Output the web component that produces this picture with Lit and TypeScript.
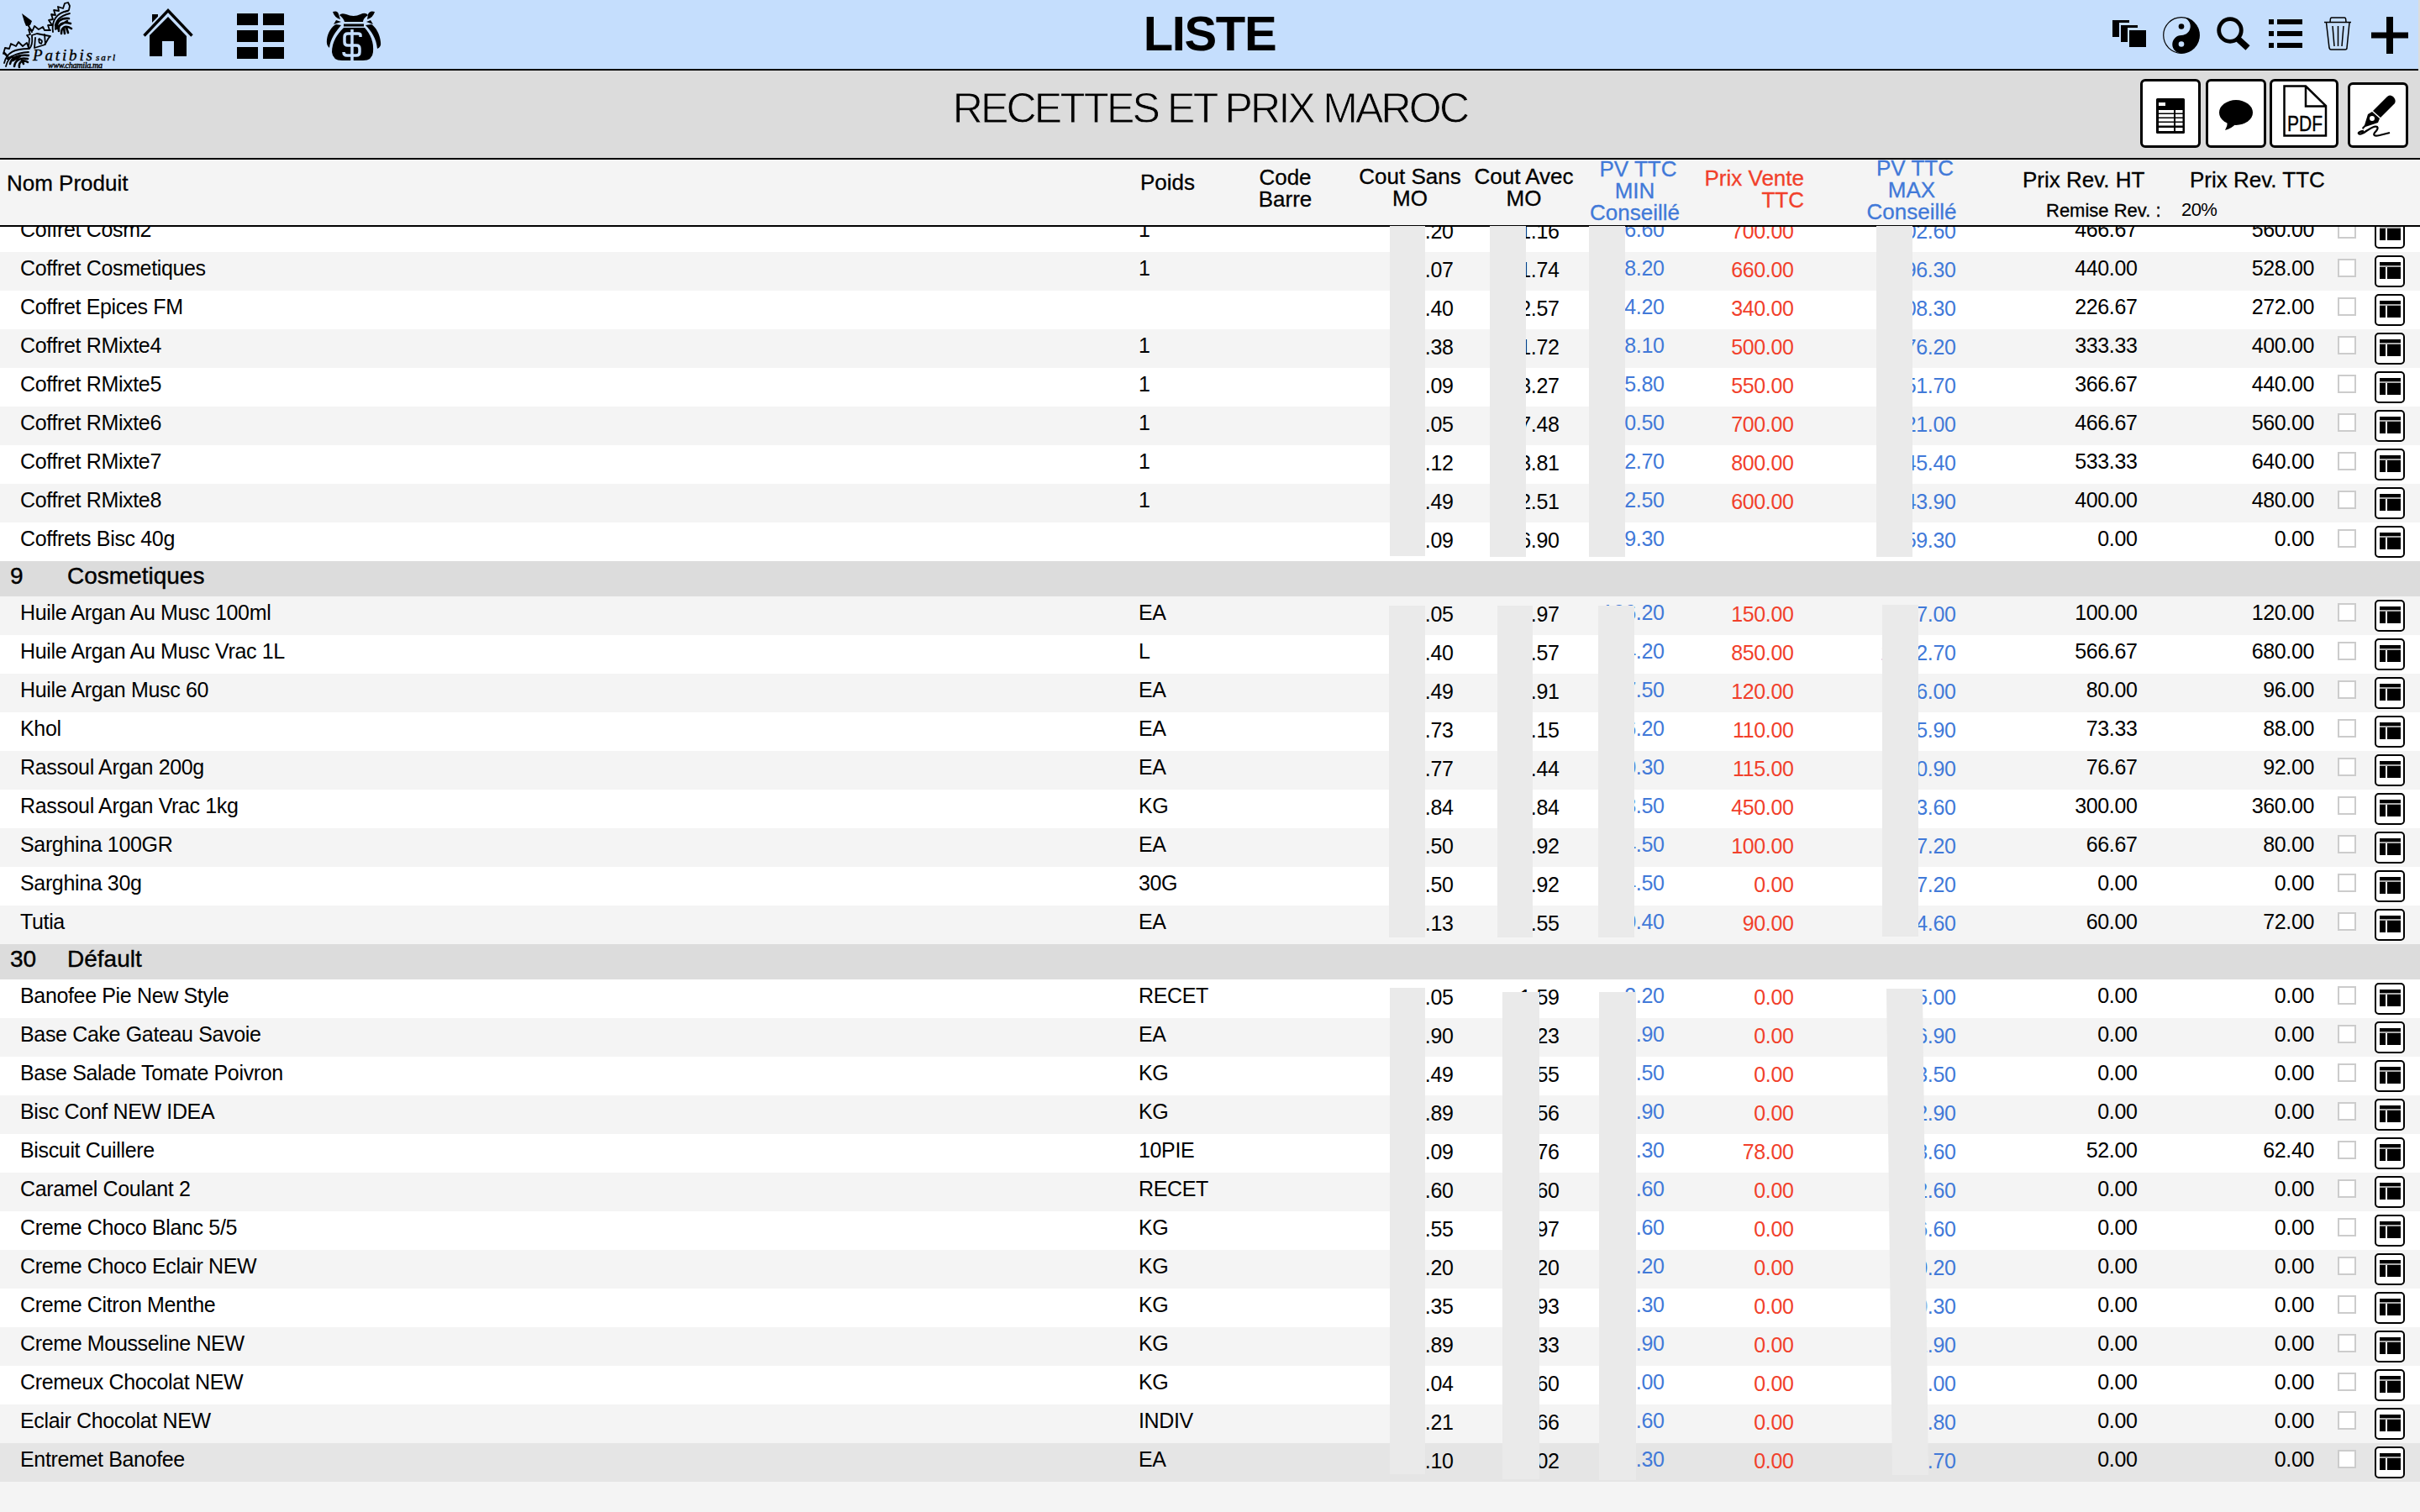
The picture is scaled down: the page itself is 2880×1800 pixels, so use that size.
import { LitElement, html, css, svg } from "lit";
import { customElement } from "lit/decorators.js";

type Row = string[];
interface Mask { x: number; w: number; y: number; h: number; clip?: string }
interface Group { id?: string; label?: string; rows: Row[]; masks: Mask[]; even: boolean }

const parse = (t: string): Row[] => t.trim().split("\n").map((l) => l.split("|").map((c) => c.trim()));

const GROUPS: Group[] = [
  {
    even: false,
    rows: parse(`
Coffret Cosm2|1|8.20|1.16|6.60|700.00|02.60|466.67|560.00
Coffret Cosmetiques|1|0.07|1.74|8.20|660.00|96.30|440.00|528.00
Coffret Epices FM||8.40|2.57|4.20|340.00|08.30|226.67|272.00
Coffret RMixte4|1|8.38|1.72|8.10|500.00|76.20|333.33|400.00
Coffret RMixte5|1|0.09|3.27|5.80|550.00|51.70|366.67|440.00
Coffret RMixte6|1|6.05|7.48|0.50|700.00|21.00|466.67|560.00
Coffret RMixte7|1|.12|3.81|2.70|800.00|45.40|533.33|640.00
Coffret RMixte8|1|.49|2.51|2.50|600.00|43.90|400.00|480.00
Coffrets Bisc 40g||8.09|6.90|9.30||59.30|0.00|0.00`),
    masks: [
      { x: 1654, w: 42, y: -1, h: 393 },
      { x: 1773, w: 43, y: -1, h: 394 },
      { x: 1891, w: 43, y: -1, h: 394 },
      { x: 2233, w: 43, y: -1, h: 394 },
    ],
  },
  {
    id: "9", label: "Cosmetiques", even: true,
    rows: parse(`
Huile Argan Au Musc 100ml|EA|.05|.97|106.20|150.00|7.00|100.00|120.00
Huile Argan Au Musc Vrac 1L|L|.40|.57|4.20|850.00|1\u200a202.70|566.67|680.00
Huile Argan Musc 60|EA|.49|.91|7.50|120.00|6.00|80.00|96.00
Khol|EA|.73|.15|6.20|110.00|5.90|73.33|88.00
Rassoul Argan 200g|EA|.77|.44|0.30|115.00|0.90|76.67|92.00
Rassoul Argan Vrac 1kg|KG|.84|.84|8.50|450.00|3.60|300.00|360.00
Sarghina 100GR|EA|.50|.92|4.50|100.00|7.20|66.67|80.00
Sarghina 30g|30G|.50|.92|4.50|0.00|7.20|0.00|0.00
Tutia|EA|.13|.55|0.40|90.00|4.60|60.00|72.00`),
    masks: [
      { x: 1653, w: 43, y: 11, h: 395 },
      { x: 1782, w: 42, y: 11, h: 395 },
      { x: 1902, w: 43, y: 11, h: 395 },
      { x: 2240, w: 43, y: 10, h: 395 },
    ],
  },
  {
    id: "30", label: "Défault", even: false,
    rows: parse(`
Banofee Pie New Style|RECET|.05|1.59|2.20|0.00|5.00|0.00|0.00
Base Cake Gateau Savoie|EA|.90|.23|.90|0.00|6.90|0.00|0.00
Base Salade Tomate Poivron|KG|.49|.55|.50|0.00|3.50|0.00|0.00
Bisc Conf NEW IDEA|KG|.89|.56|.90|0.00|2.90|0.00|0.00
Biscuit Cuillere|10PIE|.09|.76|.30|78.00|3.60|52.00|62.40
Caramel Coulant 2|RECET|.60|.60|.60|0.00|2.60|0.00|0.00
Creme Choco Blanc 5/5|KG|.55|.97|.60|0.00|6.60|0.00|0.00
Creme Choco Eclair NEW|KG|.20|.20|.20|0.00|0.20|0.00|0.00
Creme Citron Menthe|KG|.35|.93|.30|0.00|0.30|0.00|0.00
Creme Mousseline NEW|KG|.89|.33|.90|0.00|2.90|0.00|0.00
Cremeux Chocolat NEW|KG|.04|.60|.00|0.00|.00|0.00|0.00
Eclair Chocolat NEW|INDIV|.21|.66|.60|0.00|.80|0.00|0.00
Entremet Banofee|EA|.10|.02|.30|0.00|.70|0.00|0.00`),
    masks: [
      { x: 1654, w: 42, y: 10, h: 579 },
      { x: 1788, w: 44, y: 15, h: 580 },
      { x: 1903, w: 44, y: 15, h: 581 },
      { x: 2245, w: 50, y: 11, h: 579, clip: "polygon(0 0, 86% 0, 100% 100%, 14% 100%)" },
    ],
  },
];

const scallops = svg`
  <g fill="none" stroke="#000" stroke-linecap="round" stroke-linejoin="round">
    <g stroke-width="1.8">
      <path d="M4 64 6 57 11 58 13 52 19 55 22 50 27 55 32 51 34 57 35 46 32 42 36 41 34 35 39 36 41 31 46 35 51 32 53 36 60 36"/>
      <path d="M59 36 57 30 62 30 58 24 63 23 61 17 66 18 64 12 70 13 69 8 75 10 77 4 81 3 83 7 82 12 77 14"/>
      <path d="M63 38C61 25 67 15 81 13M66 35C65 25 70 19 83 16" />
      <path d="M5 75C8 62 18 58 34 58M7 79C10 66 20 63 34 62" />
      <path d="M35 58C40 52 38 47 38 42L44 40 59 43M42 45 41 57 54 53 53 41M60 43C56 46 56 51 53 53M46 47Q52 47 49 52Q45 51 47 46"/>
    </g>
    <g stroke-width="2.6">
      <path d="M68 34C67 26 72 21 82 22M70 37C69 29 74 25 84 28M73 40C73 33 77 29 85 34M66 30 69 25M77 40 76 33M81 39 79 33M70 31 80 25"/>
      <path d="M12 76C14 68 22 65 34 66M17 79C18 72 24 68 33 70M23 80C22 74 27 70 33 74M9 70 15 67M28 76 26 71M5 63 9 67M15 72 24 67"/>
    </g>
    <path d="M33 29 38 38" stroke-width="2"/>
  </g>
  <path d="M26 16 38 25 36 30 31 31 29 26Z"/>`;

@customElement("app-root")
export class AppRoot extends LitElement {
  static styles = css`
    :host { display: block; width: 2880px; height: 1800px; overflow: hidden; background: #f4f4f4; color: #000;
      font-family: "Liberation Sans", Arial, sans-serif; }
    * { box-sizing: border-box; }
    svg { display: block; flex: none; overflow: visible; }
    .bars { background: #dcdcdc; }
    .top { height: 84px; margin-right: 2px; background: #c5defd; border-bottom: 2px solid #000;
      display: grid; grid-template-columns: 1fr auto 1fr; }
    .left { display: flex; align-items: flex-start; }
    .logo { width: 144px; height: 82px; margin-right: 26px; }
    .script { font-family: "Liberation Serif", serif; font-style: italic; stroke: #000; stroke-width: 0.4px; }
    .home { margin: 10px 52px 0 0; }
    .tiles { margin: 16px 50px 0 0; }
    .bag { margin-top: 12px; }
    .liste { font-size: 58px; font-weight: 700; line-height: 80px; letter-spacing: -1.4px; margin: 0; padding-left: 1px; }
    .right { display: flex; justify-content: flex-end; align-items: flex-start; padding: 20px 12px 0 0; }
    .band { height: 106px; border-bottom: 2px solid #000; display: grid; grid-template-columns: 1fr auto 1fr; }
    .title { grid-column: 2; margin: 0; font-size: 50px; font-weight: 400; line-height: 90px; letter-spacing: -2.8px;
      -webkit-text-stroke: 0.9px #dcdcdc; }
    .tools { display: flex; justify-content: flex-end; align-items: flex-start; padding: 10px 14px 0 0; }
    .tool { background: #fff; border: 3px solid #000; border-radius: 6px; height: 82px; display: flex; align-items: center; justify-content: center; }
    .head { height: 80px; border-bottom: 2px solid #000; background: #f4f4f4; display: grid; align-items: start;
      grid-template-columns: 1355px 119px 111px 186px 85px 179px 112px 256px 195px 282px;
      font-size: 26px; line-height: 26px; -webkit-text-stroke: 0.3px currentColor; }
    .head > div { white-space: pre; }
    .c { display: flex; flex-direction: column; align-items: center; }
    .vente { margin-left: -20px; }
    .sub { font-size: 22px; margin-top: 11px; }
    .thin { -webkit-text-stroke: 0; letter-spacing: -0.6px; margin-top: 10px; }
    .blue { color: #4179d8; }
    .red { color: #f1402b; }
    .body { position: relative; }
    .list { height: 1530px; overflow: hidden; }
    .first { margin-top: -16px; }
    .section { height: 42px; background: #dcdcdc; display: grid; grid-template-columns: 68px 1fr; padding-left: 12px;
      font-size: 28px; line-height: 35px; -webkit-text-stroke: 0.4px #000; }
    .rows { position: relative; }
    .row { height: 46px; display: grid; background: #fff; font-size: 25px; line-height: 38px; letter-spacing: -0.35px;
      grid-template-columns: 1355px 374.500px 126px 125px 154px 193px 216px 210.500px 27px 45px 54px; }
    .row.even { background: #f4f4f4; }
    .row.last { background: #e5e5e5; }
    .name { padding-left: 24px; }
    .n { text-align: right; white-space: nowrap; }
    .wcell { display: flex; justify-content: space-between; }
    .low { padding-top: 2px; }
    .check { width: 22px; height: 22px; border: 2px solid #ccc; background: #fff; margin: 8px 0 0 1px; }
    .btn { width: 36px; height: 38px; margin-top: 4px; border: 2px solid #000; border-radius: 5px; background: #fff; }
    .mask { position: absolute; background: #eaeaea; }
  `;

  private col(lines: string[], top: number, cls = "", shift = 0) {
    return html`<div class="c ${cls}" style="margin-top:${top}px">${lines.map((l, i) =>
      html`<span style="${i === 0 && shift ? `padding-left:${shift}px` : ""}">${l}</span>`)}</div>`;
  }

  private masks(list: Mask[]) {
    return list.map((m) => html`<div class="mask" style="left:${m.x}px;top:${m.y}px;width:${m.w}px;height:${m.h}px;${m.clip ? `clip-path:${m.clip}` : ""}"></div>`);
  }

  private row(r: Row, i: number, g: Group) {
    const even = (i % 2 === 1) !== g.even;
    const last = r[0] === "Entremet Banofee";
    return html`<div class="row ${even ? "even" : ""} ${last ? "last" : ""}">
      <div class="name">${r[0]}</div>
      <div class="wcell"><span>${r[1]}</span><span class="low">${r[2]}</span></div>
      <div class="n low">${r[3]}</div>
      <div class="n blue">${r[4]}</div>
      <div class="n low red">${r[5]}</div>
      <div class="n low blue">${r[6]}</div>
      <div class="n">${r[7]}</div>
      <div class="n">${r[8]}</div>
      <div></div>
      <div><div class="check"></div></div>
      <div><div class="btn"><svg width="32" height="34"><path d="M4 6h25v4H4z M4 12h7v14H4z M13 12h16v14H13z"/><path fill="#aaa" d="M4 10h25v2H4z"/></svg></div></div>
    </div>`;
  }

  render() {
    return html`<div class="bars">
      <header class="top">
        <div class="left">
          <svg class="logo" viewBox="0 0 144 82">${scallops}
            <text class="script" x="39" y="72" font-size="19" textLength="71">Patibis</text>
            <text class="script" x="114" y="72" font-size="11" textLength="23">sarl</text>
            <text class="script" x="57" y="80.500" font-size="10" textLength="65">www.chamila.ma</text>
          </svg>
          <svg class="home" width="60" height="58"><path d="M11 7h7v6l-7 8z"/><path d="M8 32 30 10 52 33v24H37V39H23v18H8z"/><path d="M1.500 32.500 30 3 58.500 32.500" fill="none" stroke="#c5defd" stroke-width="8" /><path d="M1.500 32.500 30 2.500 58.500 32.500" fill="none" stroke="#000" stroke-width="3.400"/></svg>
          <svg class="tiles" width="56" height="54"><path d="M0 0h25v14H0zM31 0h25v14H31zM0 20h25v14H0zM31 20h25v14H31zM0 40h25v14H0zM31 40h25v14H31z"/></svg>
          <svg class="bag" width="66" height="62" viewBox="0 0 66 62"><path d="M8 2Q14 0 15 5L17 11Q10 9 8 2zM58 2Q52 0 50 5L49 11Q56 9 58 2zM16 6Q18 3 24 5Q33 9 41 5Q47 2 50 6Q44 10 44 14H22Q21 10 16 6zM21 16.500H45V19.500H21zM12 12 18 14 9 17zM53 12 48 14 56 17z"/><path d="M12 17 18 18C12 25 5 34 4 45Q0 42 1 35C2 27 7 19 12 17zM54 17 47 18C54 25 60 34 61 46Q66 44 65 38C64 28 59 20 54 17z"/><path d="M21 21H46C53 29 57 38 56 50Q55 60 44 60H19Q8 60 7 50C7 38 13 29 21 21z"/><path d="M41 32V30Q41 28 38 28H26Q22 28 22 32V38Q22 42 26 42H36Q40 42 40 46V50Q40 54 36 54H25Q21 54 21 50M31 23V60" fill="none" stroke="#c5defd" stroke-width="3.500"/></svg>
        </div>
        <h1 class="liste">LISTE</h1>
        <div class="right">
          <svg width="40" height="44" style="margin-right:20px"><path d="M0 4h20v3H8v17H0zM10 10h20v3H18v17h-8zM20 16h20v20H20z"/></svg>
          <svg width="44" height="44" viewBox="0 0 44 44" style="margin-right:20px"><circle cx="22" cy="22" r="21.300" fill="none" stroke="#000" stroke-width="1.200"/><path d="M22 .500A21.500 21.500 0 0 1 22 43.500A10.750 10.750 0 0 1 22 22A10.750 10.750 0 0 0 22 .500z"/><circle cx="22" cy="11.500" r="3.300"/><circle cx="22" cy="32.500" r="3.300" fill="#c5defd"/></svg>
          <svg width="40" height="40" style="margin-right:22px"><circle cx="16" cy="16" r="13.300" fill="none" stroke="#000" stroke-width="4.800"/><path d="M25 26 37 37" stroke="#000" stroke-width="7.500"/></svg>
          <svg width="40" height="40" style="margin-right:26px"><path d="M0 3h6v6H0zM10 3h30v6H10zM0 17h6v6H0zM10 17h30v6H10zM0 31h6v6H0zM10 31h30v6H10z"/></svg>
          <svg width="32" height="40" style="margin-right:24px" fill="none" stroke="#000" stroke-width="1.500"><path d="M0 6.500H32M7 6 7.500 2Q8 1 9 1H24Q25 1 25.500 2L26 6M2.500 7 6 37Q6.500 39 8 39H25Q27 39 27 37L30 7M10 11 12 35M16.500 11V35M23 11 21 35"/></svg>
          <svg width="44" height="44"><path d="M18 0h8v18.500h18v7H26V44h-8V25.500H0v-7h18z"/></svg>
        </div>
      </header>
      <div class="band">
        <h2 class="title">RECETTES ET PRIX MAROC</h2>
        <div class="tools">
          <div class="tool" style="width:72px;margin-right:6px"><svg width="34" height="42" style="margin-top:6px"><rect width="34" height="42" rx="1.500"/><path fill="#fff" d="M3 5h8v4H3zM3 14h18v3.500H3zM23 14h8.500v3.500H23zM3 19h18v3.500H3zM23 19h8.500v3.500H23zM3 24h18v3.500H3zM23 24h8.500v3.500H23zM3 29h18v3.500H3zM23 29h8.500v3.500H23zM3 35h18v4H3zM23 35h8.500v4H23z"/></svg></div>
          <div class="tool" style="width:72px;margin-right:4px"><svg width="40" height="36" style="margin-top:4px"><ellipse cx="20" cy="15" rx="20" ry="15"/><path d="M10 25Q10 31 7 36Q15 34 20 28z"/></svg></div>
          <div class="tool" style="width:82px;margin-right:11px"><svg width="52" height="62" style="margin:-6px 0 0 2px"><path d="M1.500 1.500H27L51 25V60.500H1.500zM27 1.500V25.500H51" fill="none" stroke="#000" stroke-width="2.500"/><text x="5" y="55" font-size="25" textLength="42" lengthAdjust="spacingAndGlyphs" stroke="#000" stroke-width=".4">PDF</text></svg></div>
          <div class="tool" style="width:72px;height:78px;margin-top:4px"><svg width="46" height="50" viewBox="0 0 46 50" style="margin:2px 2px 0 0"><path d="M35 2Q38-1 42 2Q46 6 44 10L27 27 18 19z"/><path d="M17 20 26 28 24 33 9 38 6 41 5 39 8 36 12 23z"/><circle cx="17" cy="28" r="3" fill="#fff"/><path d="M7 43Q0 44 1 46Q3 48 10 43Q20 36 23 38Q25 40 20 45Q17 50 26 48L38 45" fill="none" stroke="#000" stroke-width="2.300"/></svg></div>
        </div>
      </div>
      <div class="head">
        <div style="padding:15px 0 0 8px">Nom Produit</div>
        <div style="padding:14px 0 0 2px">Poids</div>
        ${this.col(["Code", "Barre"], 8)}
        ${this.col(["Cout Sans", "MO"], 7)}
        ${this.col(["Cout Avec", "MO"], 7)}
        ${this.col(["PV TTC", "MIN", "Conseillé"], -2, "blue", 8)}
        <div class="red n vente" style="padding-top:9px">Prix Vente\nTTC</div>
        ${this.col(["PV TTC", "MAX", "Conseillé"], -3, "blue", 8)}
        <div style="padding:11px 0 0 4px"><div>Prix Rev. HT</div><div class="sub" style="padding-left:28px">Remise Rev. :</div></div>
        <div style="padding:11px 0 0 8px"><div>Prix Rev. TTC</div><div class="sub thin" style="margin-left:-10px">20%</div></div>
      </div>
    </div>
    <div class="body">
      <div class="list">
        ${GROUPS.map((g, gi) => html`<section class="${gi === 0 ? "first" : ""}">
          ${g.label ? html`<div class="section"><span>${g.id}</span><span>${g.label}</span></div>` : ""}
          <div class="rows">
            ${g.rows.map((r, i) => this.row(r, i, g))}
            ${gi === 0 ? "" : this.masks(g.masks)}
          </div>
        </section>`)}
      </div>
      ${this.masks(GROUPS[0].masks)}
    </div>`;
  }
}
